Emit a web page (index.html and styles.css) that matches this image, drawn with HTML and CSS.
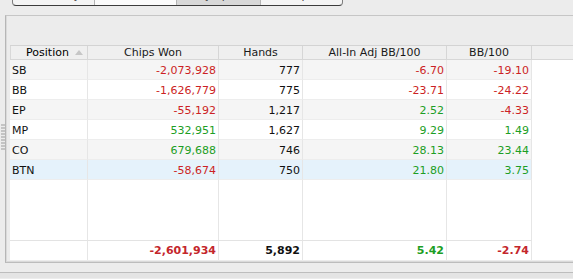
FILE: index.html
```html
<!DOCTYPE html>
<html>
<head>
<meta charset="utf-8">
<link rel="stylesheet" href="styles.css">
</head>
<body>
<div class="tabs">
  <div class="seg"><span>Summary</span></div>
  <div class="seg"><span>Sessions</span></div>
  <div class="seg sel"><span>By Spot</span></div>
  <div class="seg"><span>Graphs</span></div>
</div>
<div class="main">
  <div class="gutter"><div class="handle"></div></div>
  <div class="panel">
    <div class="table">
      <div class="row head">
        <div class="c sorted">Position<span class="arrow"></span></div>
        <div class="c">Chips Won</div>
        <div class="c">Hands</div>
        <div class="c">All-In Adj BB/100</div>
        <div class="c">BB/100</div>
        <div class="c last"></div>
      </div>
      <div class="row alt">
        <div class="c l">SB</div><div class="c r neg">-2,073,928</div><div class="c r">777</div><div class="c r neg">-6.70</div><div class="c r neg">-19.10</div><div class="c last"></div>
      </div>
      <div class="row">
        <div class="c l">BB</div><div class="c r neg">-1,626,779</div><div class="c r">775</div><div class="c r neg">-23.71</div><div class="c r neg">-24.22</div><div class="c last"></div>
      </div>
      <div class="row alt">
        <div class="c l">EP</div><div class="c r neg">-55,192</div><div class="c r">1,217</div><div class="c r pos">2.52</div><div class="c r neg">-4.33</div><div class="c last"></div>
      </div>
      <div class="row">
        <div class="c l">MP</div><div class="c r pos">532,951</div><div class="c r">1,627</div><div class="c r pos">9.29</div><div class="c r pos">1.49</div><div class="c last"></div>
      </div>
      <div class="row alt">
        <div class="c l">CO</div><div class="c r pos">679,688</div><div class="c r">746</div><div class="c r pos">28.13</div><div class="c r pos">23.44</div><div class="c last"></div>
      </div>
      <div class="row selected">
        <div class="c l">BTN</div><div class="c r neg">-58,674</div><div class="c r">750</div><div class="c r pos">21.80</div><div class="c r pos">3.75</div><div class="c last"></div>
      </div>
      <div class="row filler">
        <div class="c"></div><div class="c"></div><div class="c"></div><div class="c"></div><div class="c"></div><div class="c last"></div>
      </div>
      <div class="row total">
        <div class="c"></div><div class="c r neg">-2,601,934</div><div class="c r">5,892</div><div class="c r pos">5.42</div><div class="c r neg">-2.74</div><div class="c last"></div>
      </div>
    </div>
  </div>
</div>
<div class="footer"></div>
</body>
</html>
```
FILE: styles.css
```css
* { box-sizing: border-box; }
html, body { margin: 0; padding: 0; }
body {
  background: #ececec;
  font-family: "DejaVu Sans", "Liberation Sans", sans-serif;
  font-size: 11px;
  color: #111;
  width: 573px;
  height: 279px;
  overflow: hidden;
}
.tabs {
  display: flex;
  margin-left: 12px;
  width: 331px;
  height: 6px;
  margin-bottom: 9px;
  border: 1px solid #7d7d7d;
  border-top: none;
  border-bottom-color: #3c3c3c;
  border-radius: 0 0 4px 4px;
  overflow: hidden;
  background: #f4f4f4;
}
.seg {
  flex: 0 0 auto;
  width: 82px;
  border-right: 1px solid #b4b4b4;
  display: flex;
  justify-content: center;
  align-items: flex-end;
  overflow: hidden;
  color: #444;
}
.seg:nth-child(2) { width: 82px; background: #fbfbfb; }
.seg:nth-child(3) { width: 84px; }
.seg:last-child { border-right: none; flex: 1; }
.seg.sel { background: #d8d8d8; }
.seg span { line-height: 13px; margin-bottom: 3px; }

.main { display: flex; height: 248px; }
.gutter { width: 5px; flex: 0 0 5px; }
.handle {
  margin-top: 109px;
  margin-left: 1px;
  width: 4px;
  height: 27px;
  background:
    repeating-linear-gradient(to bottom, #c4c4c4 0 2px, transparent 2px 3px);
}
.panel {
  flex: 1;
  border-top: 1px solid #c6c6c6;
  border-left: 1px solid #b6b6b6;
  border-bottom: 1px solid #bcbcbc;
  box-shadow: inset 1px 0 0 #dadada, inset 0 -1px 0 #dadada;
  padding: 29px 0 2px 4px;
}
.table { width: 100%; background: #fff; }
.row {
  display: grid;
  grid-template-columns: 78px 131px 84px 144px 85px 1fr;
  height: 20px;
}
.c {
  border-right: 1px solid #e6e6e6;
  border-bottom: 1px solid #ededed;
  padding: 3px 2px 0 2px;
  line-height: 16px;
  white-space: nowrap;
  overflow: hidden;
}
.c.last { border-right: none; border-bottom: none; background: #fff; }
.c.r { text-align: right; }
.c.l { text-align: left; padding-left: 2px; }
.neg { color: #cc1f24; }
.pos { color: #1c9e24; }
.row.alt .c { background: #f5f5f5; }
.row.selected .c { background: #e5f2fb; }
.row .c.last { background: #fff; }
.row.filler { height: 60px; }
.row.filler .c { border-bottom: none; }
.row.total .c {
  border-top: 1px solid #e3e3e3;
  border-bottom: none;
  font-weight: bold;
  padding-top: 2px;
  color: #111;
}
.row.total .c.last { border-top: none; }
.row.total .c.neg { color: #c4262c; }
.row.total .c.pos { color: #1c9e24; }

.row.head {
  height: 15px;
  background: #efefef;
  border-top: 1px solid #d3d3d3;
  border-bottom: 1px solid #d7d7d7;
  box-shadow: inset 1px 0 0 #d8d8d8;
}
.row.head .c {
  text-align: center;
  padding: 0;
  line-height: 13px;
  border-bottom: none;
  border-right: 1px solid #d6d6d6;
  color: #1a1a1a;
  position: relative;
  background: transparent;
}
.row.head .c.last { border-right: none; background: transparent; }
.row.head .c.sorted { color: #000; padding-right: 2px; }
.arrow {
  position: absolute;
  right: 4px;
  top: 4px;
  width: 0;
  height: 0;
  border-left: 4px solid transparent;
  border-right: 4px solid transparent;
  border-bottom: 5px solid #c6c6c6;
}
.footer {
  height: 15px;
  background: linear-gradient(to bottom, #ececec 0 9px, #bdbdbd 9px 10px, #e4e4e4 10px);
}
```
